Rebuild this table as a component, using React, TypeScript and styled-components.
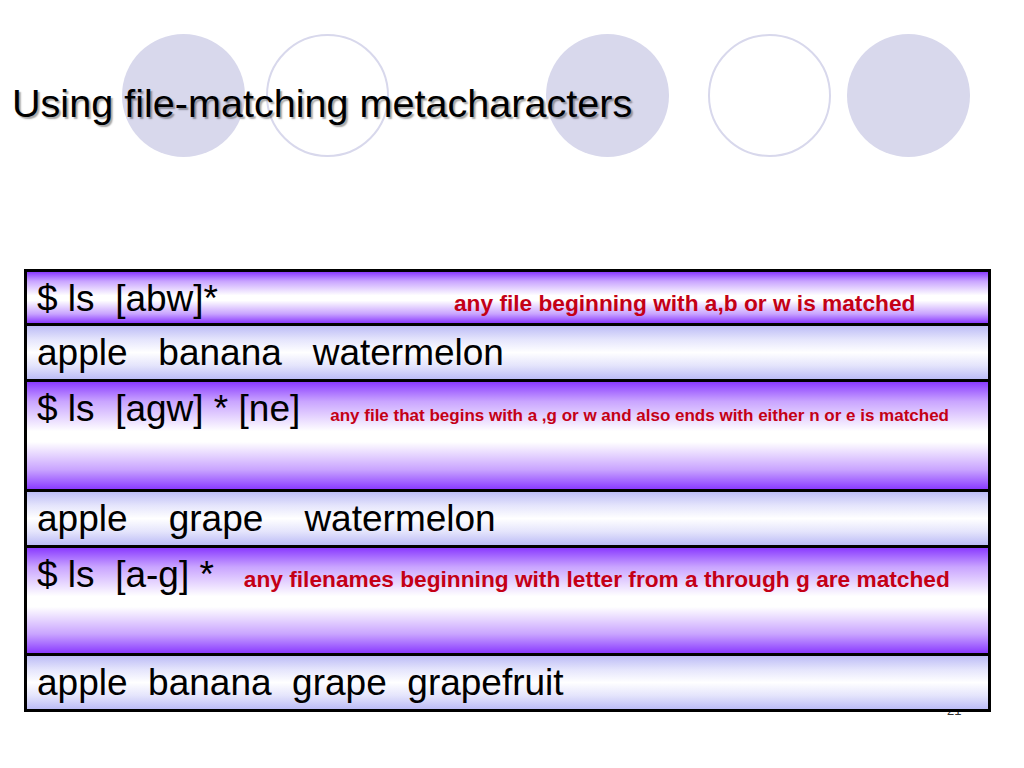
import React from "react";
import styled, { createGlobalStyle } from "styled-components";

const GlobalStyle = createGlobalStyle`
  html, body {
    margin: 0;
    padding: 0;
    background: #ffffff;
  }
  body {
    font-family: "Liberation Sans", Arial, sans-serif;
  }
`;

const Slide = styled.div`
  position: relative;
  width: 1024px;
  height: 768px;
  overflow: hidden;
  background: #ffffff;
`;

const Header = styled.header`
  position: relative;
  height: 269px;
`;

const CircleRow = styled.div`
  display: flex;
  align-items: flex-start;
  padding-top: 34px;
`;

const Circle = styled.div<{ $offset: number; $filled: boolean }>`
  flex: none;
  box-sizing: border-box;
  width: 123px;
  height: 123px;
  margin-left: ${(p) => p.$offset}px;
  border-radius: 50%;
  background: ${(p) => (p.$filled ? "#d8d8ec" : "#ffffff")};
  border: ${(p) => (p.$filled ? "none" : "2.5px solid #d8d8ec")};
`;

const Title = styled.h1`
  position: absolute;
  left: 12px;
  top: 81px;
  margin: 0;
  font-family: "Liberation Sans", Arial, sans-serif;
  font-weight: normal;
  font-size: 39.6px;
  line-height: normal;
  color: #000000;
  white-space: nowrap;
  text-shadow: 2px 2px 1.5px rgba(0, 0, 0, 0.35);
`;

const Table = styled.div`
  position: relative;
  z-index: 1;
  box-sizing: border-box;
  width: 967px;
  margin-left: 24px;
  border: 3px solid #000000;
  display: flex;
  flex-direction: column;
`;

const Row = styled.div<{ $kind: "cmd" | "out"; $h: number }>`
  box-sizing: content-box;
  height: ${(p) => p.$h - 6}px;
  padding: 6px 0 0 10px;
  border-top: 3px solid #000000;
  &:first-child {
    border-top: none;
  }
  background: ${(p) =>
    p.$kind === "cmd"
      ? "linear-gradient(to bottom, #8a3bff 0%, #c9a4ff 18%, #ffffff 46%, #ffffff 56%, #c9a4ff 82%, #8a3bff 100%)"
      : "linear-gradient(to bottom, #bcbcf6 0%, #e4e4fc 25%, #ffffff 50%, #e4e4fc 75%, #bcbcf6 100%)"};
  font-family: "Liberation Sans", Arial, sans-serif;
  font-size: 37px;
  line-height: normal;
  color: #000000;
  white-space: pre;
  overflow: hidden;
`;

const Note = styled.span<{ $size: number; $gap: number }>`
  margin-left: ${(p) => p.$gap}px;
  font-size: ${(p) => p.$size}px;
  font-weight: bold;
  color: #c40016;
`;

const PageNumber = styled.div`
  position: absolute;
  z-index: 0;
  left: 947px;
  top: 703px;
  font-family: "Liberation Sans", Arial, sans-serif;
  font-size: 13px;
  color: #333333;
`;

type RowData =
  | { kind: "cmd"; h: number; text: string; note: string; size: number; gap: number }
  | { kind: "out"; h: number; text: string };

const rows: RowData[] = [
  { kind: "cmd", h: 51, text: "$ ls  [abw]*", note: "any file beginning with a,b or w is matched", size: 22.7, gap: 236 },
  { kind: "out", h: 53, text: "apple   banana   watermelon" },
  {
    kind: "cmd",
    h: 107,
    text: "$ ls  [agw] * [ne]",
    note: "any file that begins with a ,g or w and also ends with either n or e is matched",
    size: 17,
    gap: 30,
  },
  { kind: "out", h: 53, text: "apple    grape    watermelon" },
  {
    kind: "cmd",
    h: 105,
    text: "$ ls  [a-g] *",
    note: "any filenames beginning with letter from a through g are matched",
    size: 22.7,
    gap: 30,
  },
  { kind: "out", h: 53, text: "apple  banana  grape  grapefruit" },
];

const circles = [
  { offset: 122, filled: true },
  { offset: 21, filled: false },
  { offset: 157, filled: true },
  { offset: 39, filled: false },
  { offset: 16, filled: true },
];

export default function App() {
  return (
    <>
      <GlobalStyle />
      <Slide>
        <Header>
          <CircleRow>
            {circles.map((c, i) => (
              <Circle key={i} $offset={c.offset} $filled={c.filled} />
            ))}
          </CircleRow>
          <Title>Using file-matching metacharacters</Title>
        </Header>
        <Table>
          {rows.map((r, i) => (
            <Row key={i} $kind={r.kind} $h={r.h}>
              {r.text}
              {r.kind === "cmd" && (
                <Note $size={r.size} $gap={r.gap}>
                  {r.note}
                </Note>
              )}
            </Row>
          ))}
        </Table>
        <PageNumber>21</PageNumber>
      </Slide>
    </>
  );
}
